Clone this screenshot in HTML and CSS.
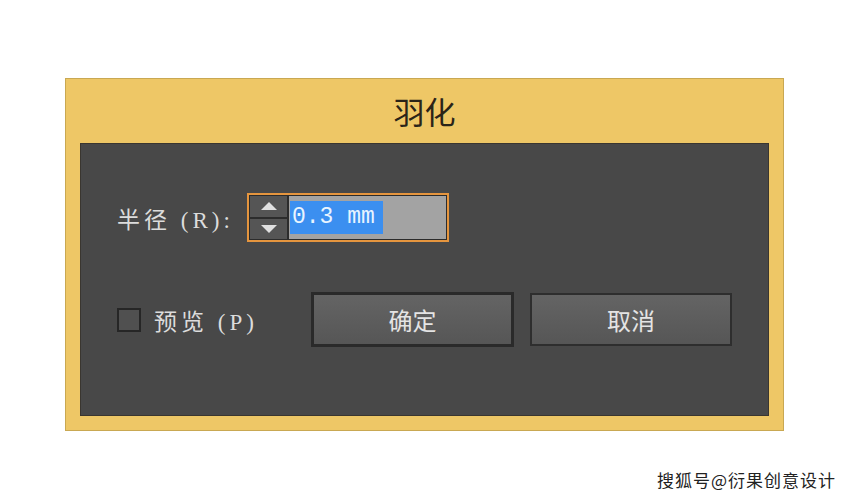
FILE: index.html
```html
<!DOCTYPE html>
<html lang="zh">
<head>
    <meta charset="UTF-8">
    <title>羽化</title>
    <link rel="stylesheet" href="styles.css">
</head>
<body>
    <div class="dialog">
        <div class="dialog-title">羽化</div>
        <div class="panel">
            <div class="row radius-row">
                <span class="label">半径 (R):</span>
                <div class="spin-input">
                    <div class="spinner">
                        <div class="spin-btn">
                            <svg width="22" height="12" viewBox="0 0 22 12"><polygon points="11,2 19,10 3,10" fill="#e0e0e0"/></svg>
                        </div>
                        <div class="spin-btn">
                            <svg width="22" height="12" viewBox="0 0 22 12"><polygon points="3,2 19,2 11,10" fill="#e0e0e0"/></svg>
                        </div>
                    </div>
                    <div class="field"><span class="selected">0.3 mm</span></div>
                </div>
            </div>
            <div class="row action-row">
                <label class="preview">
                    <span class="checkbox"></span>
                    <span class="label">预览 (P)</span>
                </label>
                <button class="btn btn-default">确定</button>
                <button class="btn">取消</button>
            </div>
        </div>
    </div>
    <div class="watermark">搜狐号@衍果创意设计</div>
</body>
</html>
```

FILE: styles.css
```css
body {
    margin: 0;
    background: #ffffff;
    font-family: "Noto Sans CJK SC", "Liberation Sans", sans-serif;
    width: 850px;
    height: 498px;
    position: relative;
    overflow: hidden;
}
.dialog {
    margin: 78px 0 0 65px;
    width: 717px;
    height: 351px;
    background: #eec766;
    border: 1px solid #c9a852;
    display: flex;
    flex-direction: column;
}
.dialog-title {
    height: 64px;
    display: flex;
    align-items: center;
    justify-content: center;
    font-size: 31px;
    color: #2a2418;
    padding-bottom: 2px;
    box-sizing: border-box;
}
.panel {
    margin: 0 14px 14px 14px;
    flex: 1;
    background: #484848;
    border: 1px solid #3a3630;
    padding: 49px 0 0 36px;
}
.row {
    display: flex;
    align-items: center;
}
.label {
    color: #dcdcdc;
    font-family: "Liberation Serif", "Noto Sans CJK SC", serif;
    font-size: 23px;
    letter-spacing: 4px;
    white-space: nowrap;
}
.radius-row .label {
    width: 130px;
}
.spin-input {
    width: 196px;
    height: 43px;
    border: 2px solid #e5953e;
    background: #2c2c2c;
    display: flex;
    padding: 1px;
    box-sizing: content-box;
}
.spinner {
    width: 37px;
    display: flex;
    flex-direction: column;
    border-right: 2px solid #2c2c2c;
}
.spin-btn {
    flex: 1;
    background: #555555;
    display: flex;
    align-items: center;
    justify-content: center;
}
.spin-btn + .spin-btn {
    border-top: 2px solid #2c2c2c;
}
.field {
    flex: 1;
    background: #a3a3a3;
    display: flex;
    align-items: center;
    padding-left: 1px;
}
.selected {
    background: #3b8ff0;
    color: #e8f4ff;
    font-family: "Liberation Mono", monospace;
    font-size: 23px;
    line-height: 33px;
    padding: 0 2px 0 2px;
    width: 89px;
    white-space: nowrap;
    overflow: hidden;
}
.action-row {
    margin-top: 50px;
}
.preview {
    display: flex;
    align-items: center;
    width: 194px;
}
.checkbox {
    width: 20px;
    height: 20px;
    border: 2px solid #262626;
    background: #505050;
    margin-right: 13px;
}
.btn {
    width: 203px;
    height: 55px;
    background: linear-gradient(#646464, #565656);
    border: 3px solid #2a2a2a;
    color: #e4e4e4;
    font-family: "Noto Sans CJK SC", sans-serif;
    font-size: 24px;
    padding: 0;
    margin-right: 16px;
}
.btn + .btn {
    border: 2px solid #2e2e2e;
    height: 53px;
    width: 202px;
}
.watermark {
    position: absolute;
    left: 657px;
    top: 467px;
    font-size: 17px;
    letter-spacing: 1px;
    color: #222222;
}
```
